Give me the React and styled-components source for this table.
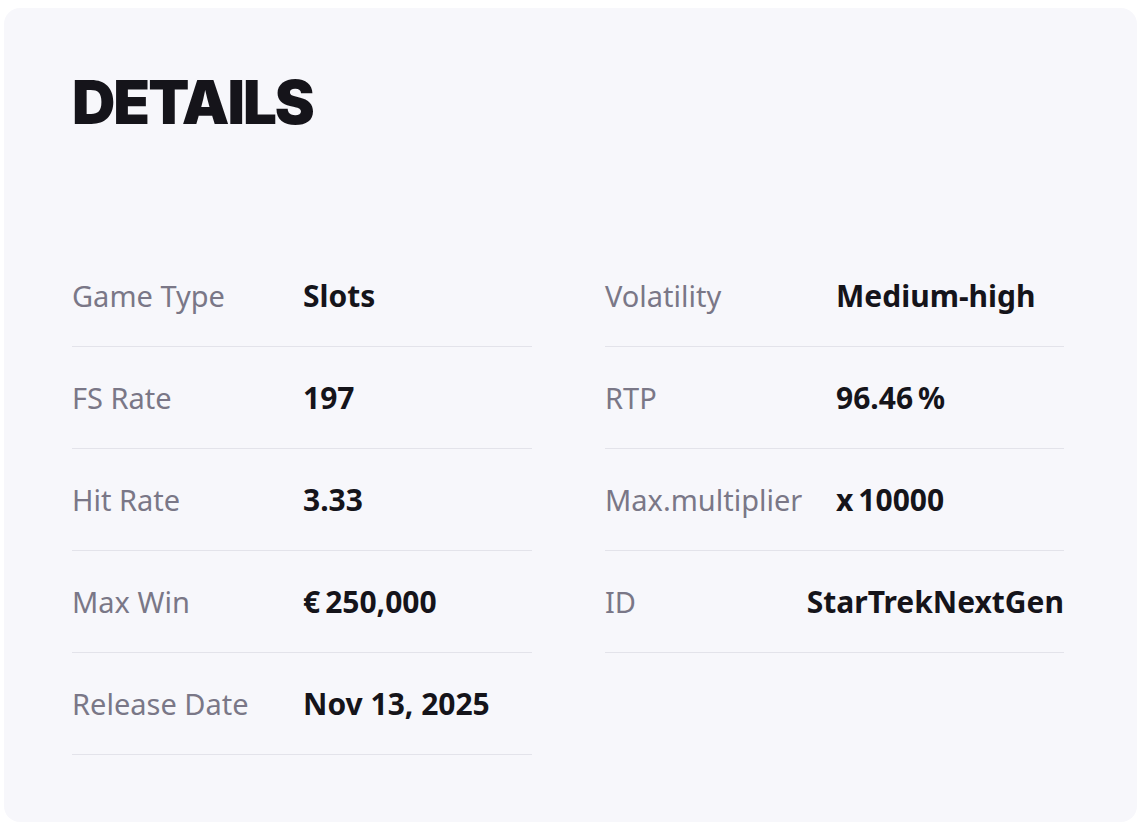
import React from "react";
import styled, { createGlobalStyle } from "styled-components";

const Global = createGlobalStyle`
  html, body { margin: 0; padding: 0; background: #ffffff; }
  body { padding: 8px 8px 0 4px; font-family: "Noto Sans", "Liberation Sans", sans-serif; }
`;

const Card = styled.section`
  box-sizing: border-box;
  width: 1133px;
  height: 814px;
  background: #f7f7fb;
  border-radius: 16px;
  padding: 64px 68px 0 68px;
`;

const Title = styled.h2`
  margin: 0;
  font-family: Inter, "Noto Sans", sans-serif;
  font-weight: 900;
  font-size: 60px;
  line-height: 60px;
  letter-spacing: -2px;
  color: #15141a;
`;

const Grid = styled.div`
  display: grid;
  grid-template-columns: 460px 459px;
  column-gap: 73px;
  margin-top: 113px;
`;

const Column = styled.div`
  display: flex;
  flex-direction: column;
`;

const Row = styled.div`
  display: flex;
  align-items: center;
  height: 101px;
  border-bottom: 1px solid #e3e3ea;
`;

const Label = styled.span`
  flex: 0 1 231px;
  min-width: 0;
  font-size: 29px;
  color: #7a7787;
  white-space: nowrap;
`;

const Value = styled.span`
  flex: 1 0 auto;
  font-size: 30px;
  font-weight: 700;
  color: #15141a;
  white-space: nowrap;
`;

const left = [
  ["Game Type", "Slots"],
  ["FS Rate", "197"],
  ["Hit Rate", "3.33"],
  ["Max Win", "€\u2009250,000"],
  ["Release Date", "Nov 13, 2025"],
];
const right = [
  ["Volatility", "Medium-high"],
  ["RTP", "96.46\u2009%"],
  ["Max.multiplier", "x\u200910000"],
  ["ID", "StarTrekNextGen"],
];

export default function App() {
  return (
    <>
      <Global />
      <Card>
        <Title>DETAILS</Title>
        <Grid>
          {[left, right].map((col, i) => (
            <Column key={i}>
              {col.map(([l, v]) => (
                <Row key={l}>
                  <Label>{l}</Label>
                  <Value>{v}</Value>
                </Row>
              ))}
            </Column>
          ))}
        </Grid>
      </Card>
    </>
  );
}
